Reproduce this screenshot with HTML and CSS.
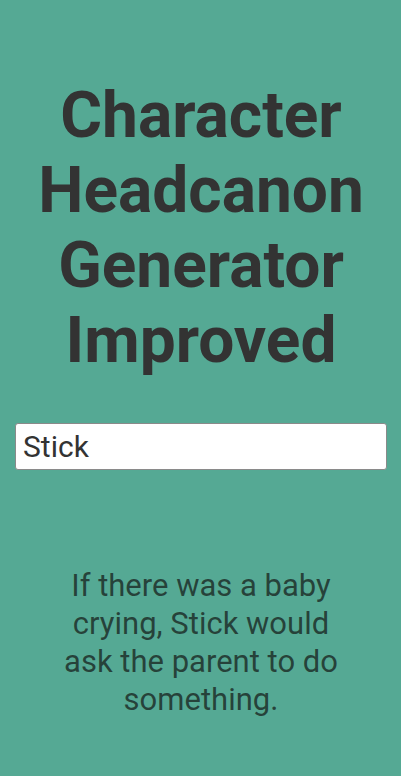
FILE: index.html
```html
<!DOCTYPE html>
<html>
<head>
<meta charset="utf-8">
<link rel="stylesheet" href="styles.css">
</head>
<body>
<div class="page">
  <h1 class="title">Character Headcanon Generator Improved</h1>
  <input class="name" type="text" value="Stick">
  <p class="result">If there was a baby crying, Stick would ask the parent to do something.</p>
</div>
</body>
</html>
```
FILE: styles.css
```css
html, body {
  margin: 0;
  padding: 0;
  background: #55a994;
}
.page {
  font-family: Roboto, "Noto Sans", sans-serif;
  padding: 78px 14px 0 15px;
  display: flex;
  flex-direction: column;
  align-items: stretch;
}
.title {
  margin: 0 0 45px;
  font-size: 64px;
  font-weight: 700;
  color: #333333;
  text-align: center;
  line-height: 75px;
  padding: 0 20px;
}
.name {
  box-sizing: border-box;
  height: 47px;
  width: 100%;
  margin: 0;
  border: 1px solid #8a8a8a;
  border-radius: 3px;
  background: #ffffff;
  font-family: Roboto, sans-serif;
  font-size: 30px;
  color: #333333;
  padding: 0 7px;
  outline: none;
}
.result {
  margin: 97px 42px 0;
  font-size: 31px;
  line-height: 38px;
  text-align: center;
  color: rgba(30, 48, 42, 0.85);
}
```
